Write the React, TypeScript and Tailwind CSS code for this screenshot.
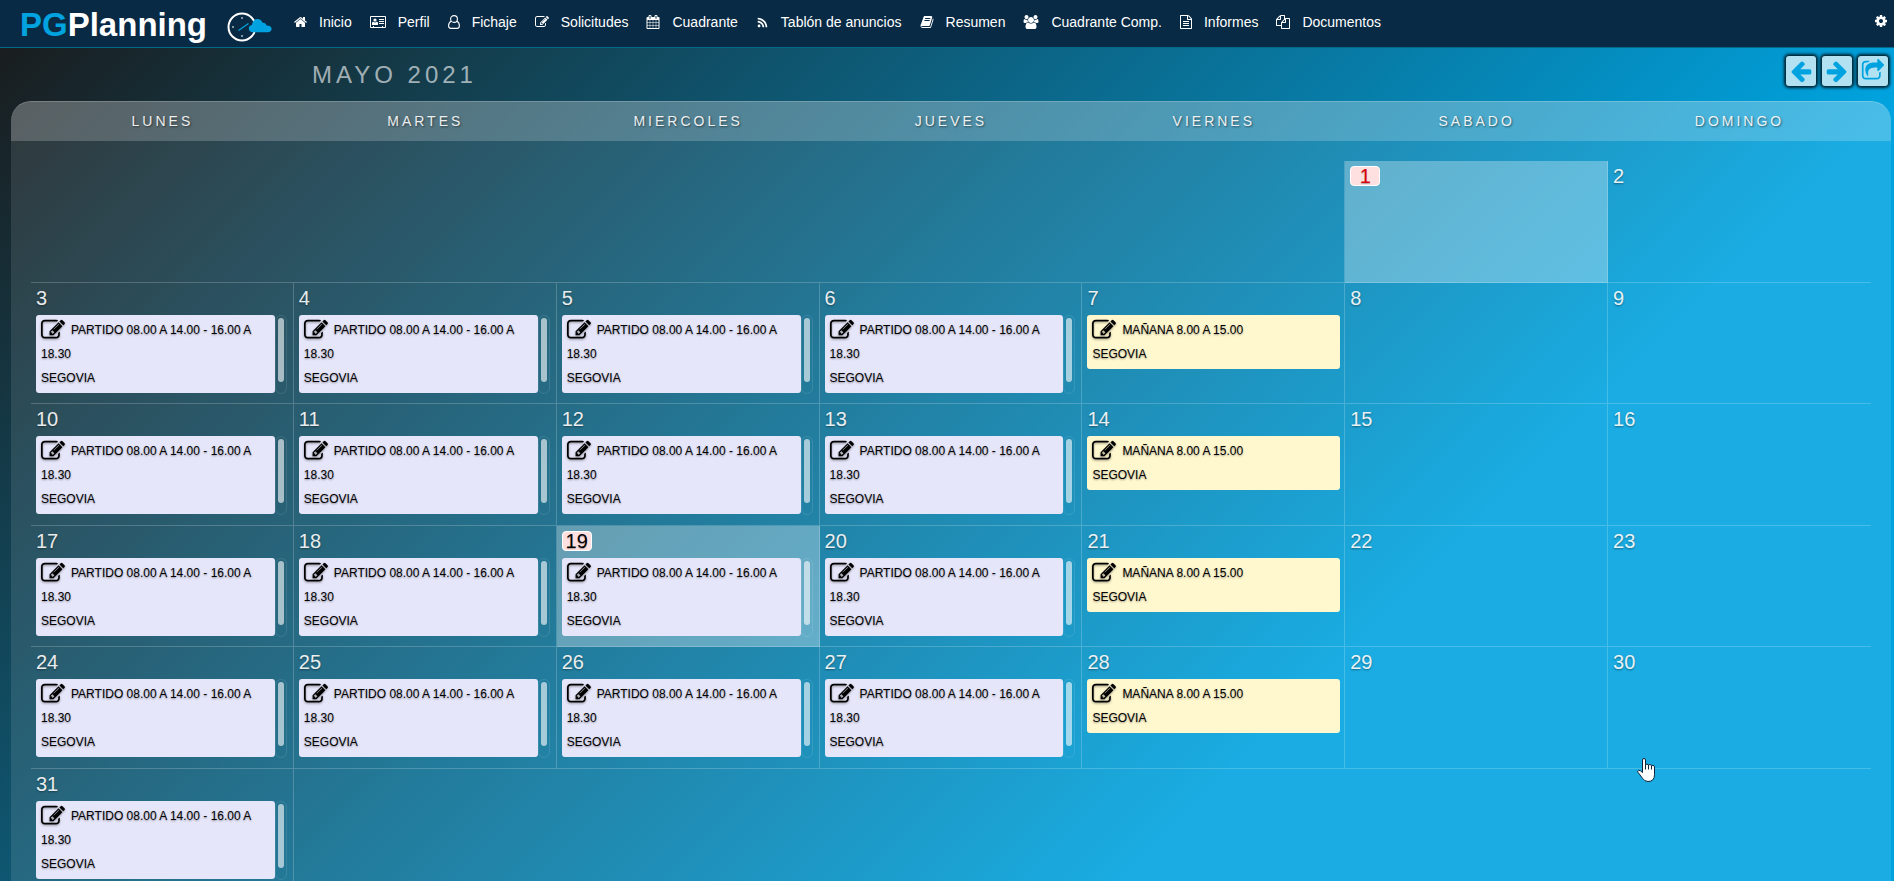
import type { ReactNode } from "react";
import { FaRss } from "react-icons/fa";

const PENCIL_SQUARE =
  "M888 1184l116-116-152-152-116 116v56h96v96h56zm440-720q-16-16-33 1l-350 350q-17 17-1 33t33-1l350-350q17-17 1-33zm80 594v190q0 119-84.5 203.5t-203.5 84.5h-832q-119 0-203.5-84.5t-84.5-203.5v-832q0-119 84.5-203.5t203.5-84.5h832q63 0 117 25 15 7 18 23 3 17-9 29l-49 49q-14 14-32 8-23-6-45-6h-832q-66 0-113 47t-47 113v832q0 66 47 113t113 47h832q66 0 113-47t47-113v-126q0-13 9-22l64-64q15-15 35-7t20 29zm-96-738l288 288-672 672h-288v-288zm444 132l-92 92-288-288 92-92q28-28 68-28t68 28l152 152q28 28 28 68t-28 68z";
const HOME =
  "M1472 992v480q0 26-19 45t-45 19h-384v-384h-256v384h-384q-26 0-45-19t-19-45v-480q0-1 .5-3t.5-3l575-474 575 474q1 2 1 6zm223-69l-62 74q-8 9-21 11h-3q-13 0-21-7l-692-577-692 577q-12 8-24 7-13-2-21-11l-62-74q-8-10-7-23.5t11-21.5l719-599q32-26 76-26t76 26l244 204v-195q0-14 9-23t23-9h192q14 0 23 9t9 23v408l219 182q10 8 11 21.5t-7 23.5z";
const CALENDAR =
  "M192 1664h288v-288h-288v288zm352 0h320v-288h-320v288zm-352-352h288v-320h-288v320zm352 0h320v-320h-320v320zm-352-384h288v-288h-288v288zm736 736h320v-288h-320v288zm-384-736h320v-288h-320v288zm768 736h288v-288h-288v288zm-384-352h320v-320h-320v320zm-352-864v-288q0-13-9.5-22.5t-22.5-9.5h-64q-13 0-22.5 9.5t-9.5 22.5v288q0 13 9.5 22.5t22.5 9.5h64q13 0 22.5-9.5t9.5-22.5zm736 864h288v-320h-288v320zm-384-384h320v-288h-320v288zm384 0h288v-288h-288v288zm32-480v-288q0-13-9.5-22.5t-22.5-9.5h-64q-13 0-22.5 9.5t-9.5 22.5v288q0 13 9.5 22.5t22.5 9.5h64q13 0 22.5-9.5t9.5-22.5zm384-64v1280q0 52-38 90t-90 38h-1408q-52 0-90-38t-38-90v-1280q0-52 38-90t90-38h128v-96q0-66 47-113t113-47h64q66 0 113 47t47 113v96h384v-96q0-66 47-113t113-47h64q66 0 113 47t47 113v96h128q52 0 90 38t38 90z";
const BOOK =
  "M1703 478q40 57 18 129l-275 906q-19 64-76.5 107.5t-122.5 43.5h-923q-77 0-148.5-53.5t-99.5-131.5q-24-67-2-127 0-4 3-27t4-37q1-8-3-21.5t-3-19.5q2-11 8-21t16.5-23.5 16.5-23.5q23-38 45-91.5t30-91.5q3-10 .5-30t-.5-28q3-11 17-28t17-23q21-36 42-92t25-90q1-9-2.5-32t.5-28q4-13 22-30.5t22-22.5q19-26 42.5-84.5t27.5-96.5q1-8-3-25.5t-2-26.5q2-8 9-18t18-23 17-21q8-12 16.5-30.5t15-35 16-36 19.5-32 26.5-23.5 36-11.5 47.5 5.5l-1 3q38-9 51-9h761q74 0 114 56t18 130l-274 906q-36 119-71.5 153.5t-128.5 34.5h-869q-27 0-38 15-11 16-1 43 24 70 144 70h923q29 0 56-15.5t35-41.5l300-987q7-22 5-57 38 15 59 43zm-1064 2q-4 13 2 22.5t20 9.5h608q13 0 25.5-9.5t16.5-22.5l21-64q4-13-2-22.5t-20-9.5h-608q-13 0-25.5 9.5t-16.5 22.5zm-83 256q-4 13 2 22.5t20 9.5h608q13 0 25.5-9.5t16.5-22.5l21-64q4-13-2-22.5t-20-9.5h-608q-13 0-25.5 9.5t-16.5 22.5z";
const USERS =
  "M593 896q-162 5-265 128h-134q-82 0-138-40.5t-56-118.5q0-353 124-353 6 0 43.5 21t97.5 42.5 119 21.5q67 0 133-23-5 37-5 66 0 139 81 256zm1071 637q0 120-73 189.5t-194 69.5h-874q-121 0-194-69.5t-73-189.5q0-53 3.5-103.5t14-109 26.5-108.5 43-97.5 62-81 85.5-53.5 111.5-20q10 0 43 21.5t73 48 107 48 135 21.5 135-21.5 107-48 73-48 43-21.5q61 0 111.5 20t85.5 53.5 62 81 43 97.5 26.5 108.5 14 109 3.5 103.5zm-1024-1277q0 106-75 181t-181 75-181-75-75-181 75-181 181-75 181 75 75 181zm704 384q0 159-112.5 271.5t-271.5 112.5-271.5-112.5-112.5-271.5 112.5-271.5 271.5-112.5 271.5 112.5 112.5 271.5zm576 225q0 78-56 118.5t-138 40.5h-134q-103-123-265-128 81-117 81-256 0-29-5-66 66 23 133 23 59 0 119-21.5t97.5-42.5 43.5-21q124 0 124 353zm-128-609q0 106-75 181t-181 75-181-75-75-181 75-181 181-75 181 75 75 181z";
const FILE_TEXT =
  "M1596 380q28 28 48 76t20 88v1152q0 40-28 68t-68 28h-1344q-40 0-68-28t-28-68v-1600q0-40 28-68t68-28h896q40 0 88 20t76 48zm-444-244v376h376q-10-29-22-41l-313-313q-12-12-41-22zm384 1528v-1024h-416q-40 0-68-28t-28-68v-416h-768v1536h1280zm-1024-864q0-14 9-23t23-9h704q14 0 23 9t9 23v64q0 14-9 23t-23 9h-704q-14 0-23-9t-9-23v-64zm736 224q14 0 23 9t9 23v64q0 14-9 23t-23 9h-704q-14 0-23-9t-9-23v-64q0-14 9-23t23-9h704zm0 256q14 0 23 9t9 23v64q0 14-9 23t-23 9h-704q-14 0-23-9t-9-23v-64q0-14 9-23t23-9h704z";
const FILES =
  "M1696 384q40 0 68 28t28 68v1216q0 40-28 68t-68 28h-960q-40 0-68-28t-28-68v-288h-544q-40 0-68-28t-28-68v-672q0-40 20-88t48-76l408-408q28-28 76-48t88-20h416q40 0 68 28t28 68v328q68-40 128-40h416zm-544 213l-299 299h299v-299zm-640-384l-299 299h299v-299zm196 647l316-316v-416h-384v416q0 40-28 68t-68 28h-416v640h512v-256q0-40 20-88t48-76zm956 804v-1152h-384v416q0 40-28 68t-68 28h-416v640h896z";
const COG =
  "M1152 896q0-106-75-181t-181-75-181 75-75 181 75 181 181 75 181-75 75-181zm512-109v222q0 12-8 23t-20 13l-185 28q-19 54-39 91 35 50 107 138 10 12 10 25t-9 23q-27 37-99 108t-94 71q-12 0-26-9l-138-108q-44 23-91 38-16 136-29 186-7 28-36 28h-222q-14 0-24.5-8.5t-11.5-21.5l-28-184q-49-16-90-37l-141 107q-10 9-25 9-14 0-25-11-126-114-165-168-7-10-7-23 0-12 8-23 15-21 51-66.5t54-70.5q-27-50-41-99l-183-27q-13-2-21-12.5t-8-23.5v-222q0-12 8-23t19-13l186-28q14-46 39-92-40-57-107-138-10-12-10-24 0-10 9-23 26-36 98.5-107.5t94.5-71.5q13 0 26 10l138 107q44-23 91-38 16-136 29-186 7-28 36-28h222q14 0 24.5 8.5t11.5 21.5l28 184q49 16 90 37l142-107q9-9 24-9 13 0 25 10 129 119 165 170 7 8 7 22 0 12-8 23-15 21-51 66.5t-54 70.5q26 50 41 98l183 28q13 2 21 12.5t8 23.5z";
const ARROW =
  "M1664 896v128q0 53-32.5 90.5t-84.5 37.5h-704l293 294q38 36 38 90t-38 90l-75 76q-37 37-90 37-52 0-91-37l-651-652q-37-37-37-90 0-52 37-91l651-650q38-38 91-38 52 0 90 38l75 74q38 38 38 91t-38 91l-293 293h704q52 0 84.5 37.5t32.5 90.5z";
const SHARE =
  "M1472 989v259q0 119-84.5 203.5t-203.5 84.5h-832q-119 0-203.5-84.5t-84.5-203.5v-832q0-119 84.5-203.5t203.5-84.5h255q13 0 22.5 9.5t9.5 22.5q0 27-26 32-77 26-133 60-10 4-16 4h-112q-66 0-113 47t-47 113v832q0 66 47 113t113 47h832q66 0 113-47t47-113v-214q0-19 18-29 28-13 54-37 16-16 35-8 21 9 21 29zm237-496l-384 384q-18 19-45 19-12 0-25-5-39-17-39-59v-192h-160q-323 0-438 131-119 137-74 473 3 23-20 34-8 2-12 2-16 0-26-13-10-14-21-31t-39.5-68.5-49.5-99.5-38.5-114-17.5-122q0-49 3.5-91t14-90 28-88 47-81.5 68.5-74 94.5-61.5 124.5-48.5 159.5-30.5 196.5-11h160v-192q0-42 39-59 13-5 25-5 26 0 45 19l384 384q19 19 19 45t-19 45z";

function Glyph({ d, box = "0 0 1792 1792", className }: { d: string; box?: string; className: string }) {
  return (
    <svg viewBox={box} fill="currentColor" aria-hidden="true" className={className}>
      <path d={d} />
    </svg>
  );
}

const navItems: { label: string; icon: ReactNode }[] = [
  { label: "Inicio", icon: <Glyph d={HOME} box="64 0 1664 1792" className="h-3.5 w-[13px]" /> },
  {
    label: "Perfil",
    icon: (
      <svg viewBox="0 0 16 12" fill="none" stroke="currentColor" aria-hidden="true" className="h-3 w-4">
        <path d="M.5.5h15v11H.5zM9 3.5h5M9 5.5h5M9 7.5h5M3.5 11v-1M12.5 11v-1" />
        <circle cx="5" cy="4" r="1.6" fill="currentColor" stroke="none" />
        <path d="M2 9V7.200q0-1.400 1.500-1.400Q5 7 6.500 5.800 8 5.800 8 7.200V9z" fill="currentColor" stroke="none" />
      </svg>
    ),
  },
  {
    label: "Fichaje",
    icon: (
      <svg viewBox="0 0 12 14" fill="none" stroke="currentColor" strokeWidth="1.1" aria-hidden="true" className="h-3.5 w-3">
        <circle cx="6" cy="4" r="3.400" />
        <path d="M3.200 6.200C1.400 7 .6 8.700.6 10.800c0 1.600.8 2.600 2.200 2.600h6.400c1.400 0 2.200-1 2.200-2.600 0-2.100-.8-3.800-2.600-4.600" />
      </svg>
    ),
  },
  { label: "Solicitudes", icon: <Glyph d={PENCIL_SQUARE} className="size-3.5" /> },
  { label: "Cuadrante", icon: <Glyph d={CALENDAR} className="size-3.5" /> },
  { label: "Tablón de anuncios", icon: <FaRss aria-hidden="true" className="h-[11px] w-[13px]" /> },
  { label: "Resumen", icon: <Glyph d={BOOK} className="size-3.5" /> },
  { label: "Cuadrante Comp.", icon: <Glyph d={USERS} box="0 0 1920 1792" className="h-3.5 w-4" /> },
  { label: "Informes", icon: <Glyph d={FILE_TEXT} box="128 0 1536 1792" className="h-3.5 w-3" /> },
  { label: "Documentos", icon: <Glyph d={FILES} className="size-3.5" /> },
];

const weekdays = ["LUNES", "MARTES", "MIERCOLES", "JUEVES", "VIERNES", "SABADO", "DOMINGO"];

const weeks = [
  [1, 2],
  [3, 4, 5, 6, 7, 8, 9],
  [10, 11, 12, 13, 14, 15, 16],
  [17, 18, 19, 20, 21, 22, 23],
  [24, 25, 26, 27, 28, 29, 30],
  [31],
];

const HOLIDAY = 1;
const TODAY = 19;

// 1 May 2021 is a Saturday
const weekdayOf = (day: number) => (day + 4) % 7;

function Logo() {
  return (
    <a href="#" aria-label="PGPlanning" className="flex items-center gap-5">
      <span className="text-[33px] leading-[50px] font-bold">
        <span className="text-[#00a3df]">PG</span>Planning
      </span>
      <svg viewBox="0 0 46 30" fill="none" aria-hidden="true" className="mt-1 h-[30px] w-[46px]">
        <circle cx="15" cy="15" r="13.500" stroke="#fff" strokeWidth="2" />
        <path d="M15 5v2M15 23v2M5 15h2" stroke="#fff" />
        <path d="M11.500 18.500 21.500 11.500" stroke="#00a3df" strokeWidth="1.200" />
        <path
          d="M26 20.200c-2.500 0-4.200-1.600-4.200-3.700 0-2 1.400-3.400 3.200-3.500.2-3.600 2.400-6 5.300-6 2.500 0 4.500 1.400 5.200 3.800 2.300-.2 3.700 1 4.100 2.700 3 0 5 1.200 5 3.300 0 2.200-1.600 3.400-3.800 3.400z"
          fill="#00a3df"
        />
      </svg>
    </a>
  );
}

function ToolButton({ label, children }: { label: string; children: ReactNode }) {
  return (
    <button
      type="button"
      aria-label={label}
      className="flex size-[30px] items-center justify-center rounded-[3px] bg-[#b2e2f2] text-[#00a3df] shadow-[0_0_3px_2px_#00202e]"
    >
      {children}
    </button>
  );
}

function Shift({ color, title }: { color: string; title: string }) {
  return (
    <div
      className={`flex-1 rounded-[3px] px-[5px] py-[3px] text-xs leading-6 text-black [text-shadow:0_1px_2px_rgba(0,0,0,0.4)] ${color}`}
    >
      <p>
        <button type="button" aria-label="Editar turno" className="mr-1.5 align-top">
          <Glyph d={PENCIL_SQUARE} className="size-6 drop-shadow-[0_1px_1px_rgba(0,0,0,0.4)]" />
        </button>
        {title}
      </p>
      <p>SEGOVIA</p>
    </div>
  );
}

function DayCell({ day }: { day: number }) {
  const weekday = weekdayOf(day);
  const marked = day === HOLIDAY || day === TODAY;
  const last = weekday === 6;
  const inLastWeek = day === 31;

  return (
    <td
      className={`border-white/20 pt-[5px] pr-1 pl-[5px] align-top ${last ? "" : "border-r"} ${inLastWeek ? "" : "border-b"} ${marked ? "bg-white/30" : ""}`}
    >
      {marked ? (
        <div
          className={`flex h-5 w-[30px] items-center justify-center rounded-[4px] border border-white bg-[#ffe0e0] text-xl leading-5 [text-shadow:0_1px_1px_rgba(0,0,0,0.3)] ${day === HOLIDAY ? "text-[#d8000c]" : "text-black"}`}
        >
          {day}
        </div>
      ) : (
        <div className="text-xl leading-5 text-white/90 [text-shadow:0_1px_2px_rgba(0,0,0,0.4)]">{day}</div>
      )}
      {weekday < 4 && day > 2 && (
        <div className="mt-[7px] flex pr-0.5">
          <Shift color="bg-[#e6e6fa]" title="PARTIDO 08.00 A 14.00 - 16.00 A 18.30" />
          <div className="-mb-px w-3 rounded-md border border-white/10 p-0.5">
            <div className="mx-auto h-16 w-1.5 rounded-full bg-white/60" />
          </div>
        </div>
      )}
      {weekday === 4 && (
        <div className="mt-[7px] flex">
          <Shift color="bg-[#fff8cf]" title="MAÑANA 8.00 A 15.00" />
        </div>
      )}
    </td>
  );
}

export default function App() {
  return (
    <div className="relative flex min-h-screen flex-col bg-[linear-gradient(135deg,#1a1a1a_0%,#00a3df_72%)] font-['Liberation_Sans',Arial,sans-serif] text-white">
      <header className="flex h-12 items-start border-b border-[#05698a] bg-[#082a45] pr-[7px] pl-5">
        <Logo />
        <nav className="ml-3 flex flex-1 pt-3">
          {navItems.map((item) => (
            <a key={item.label} href="#" className="flex items-center gap-3 px-[9px] text-sm leading-5 whitespace-nowrap">
              {item.icon}
              {item.label}
            </a>
          ))}
        </nav>
        <button type="button" aria-label="Configuración" className="mt-[15px]">
          <Glyph d={COG} box="128 128 1536 1536" className="size-3" />
        </button>
      </header>

      <div className="flex h-[53px] items-start justify-between pt-2 pr-1.5 pl-[312px]">
        <h1 className="text-2xl leading-[38px] tracking-[4px] text-white/60">MAYO 2021</h1>
        <div className="flex gap-1.5">
          <ToolButton label="Mes anterior">
            <Glyph d={ARROW} className="size-6" />
          </ToolButton>
          <ToolButton label="Mes siguiente">
            <Glyph d={ARROW} className="size-6 -scale-x-100" />
          </ToolButton>
          <ToolButton label="Compartir">
            <Glyph d={SHARE} className="size-6" />
          </ToolButton>
        </div>
      </div>

      <main className="mr-[3px] ml-[11px] flex-1 rounded-t-[20px] border-t border-white/20 bg-white/10 bg-[linear-gradient(rgba(255,255,255,0.2)_40px,transparent_40px)] bg-origin-border px-5">
        <table className="w-full table-fixed border-separate border-spacing-0">
          <thead>
            <tr>
              {weekdays.map((name) => (
                <th
                  key={name}
                  scope="col"
                  className="h-[59px] pb-[22px] text-sm font-normal tracking-[3px] text-white/90 [text-shadow:1px_1px_2px_rgba(0,0,0,0.5)]"
                >
                  {name}
                </th>
              ))}
            </tr>
          </thead>
          <tbody>
            {weeks.map((days, i) => (
              <tr key={days[0]} className={i === 5 ? "h-28" : "odd:h-[122px] even:h-[121px]"}>
                {i === 0 && <td colSpan={5} className="border-r border-b border-white/20" />}
                {days.map((day) => (
                  <DayCell key={day} day={day} />
                ))}
                {i === 5 && <td colSpan={6} />}
              </tr>
            ))}
          </tbody>
        </table>
      </main>

      {/* hand pointer */}
      <svg viewBox="0 0 18 24" aria-hidden="true" className="absolute top-[758px] left-[1637px] h-6 w-[18px]">
        <path
          d="M5.500 14.500V2q0-1.500 1.500-1.500T8.500 2v4.500q1.500-.8 3 .3 1.500-.6 3 .5 3-.4 3 1.700v7.500q0 7-6.500 7-3.500 0-5.500-3.200l-4.500-6q-1-1.500.5-2 1.500-.3 4 2.200z"
          fill="#fff"
          stroke="#12233a"
        />
        <path d="M8.500 6.500v5M11.500 7v4.500M14.500 7.500v4" stroke="#12233a" fill="none" />
      </svg>
    </div>
  );
}
